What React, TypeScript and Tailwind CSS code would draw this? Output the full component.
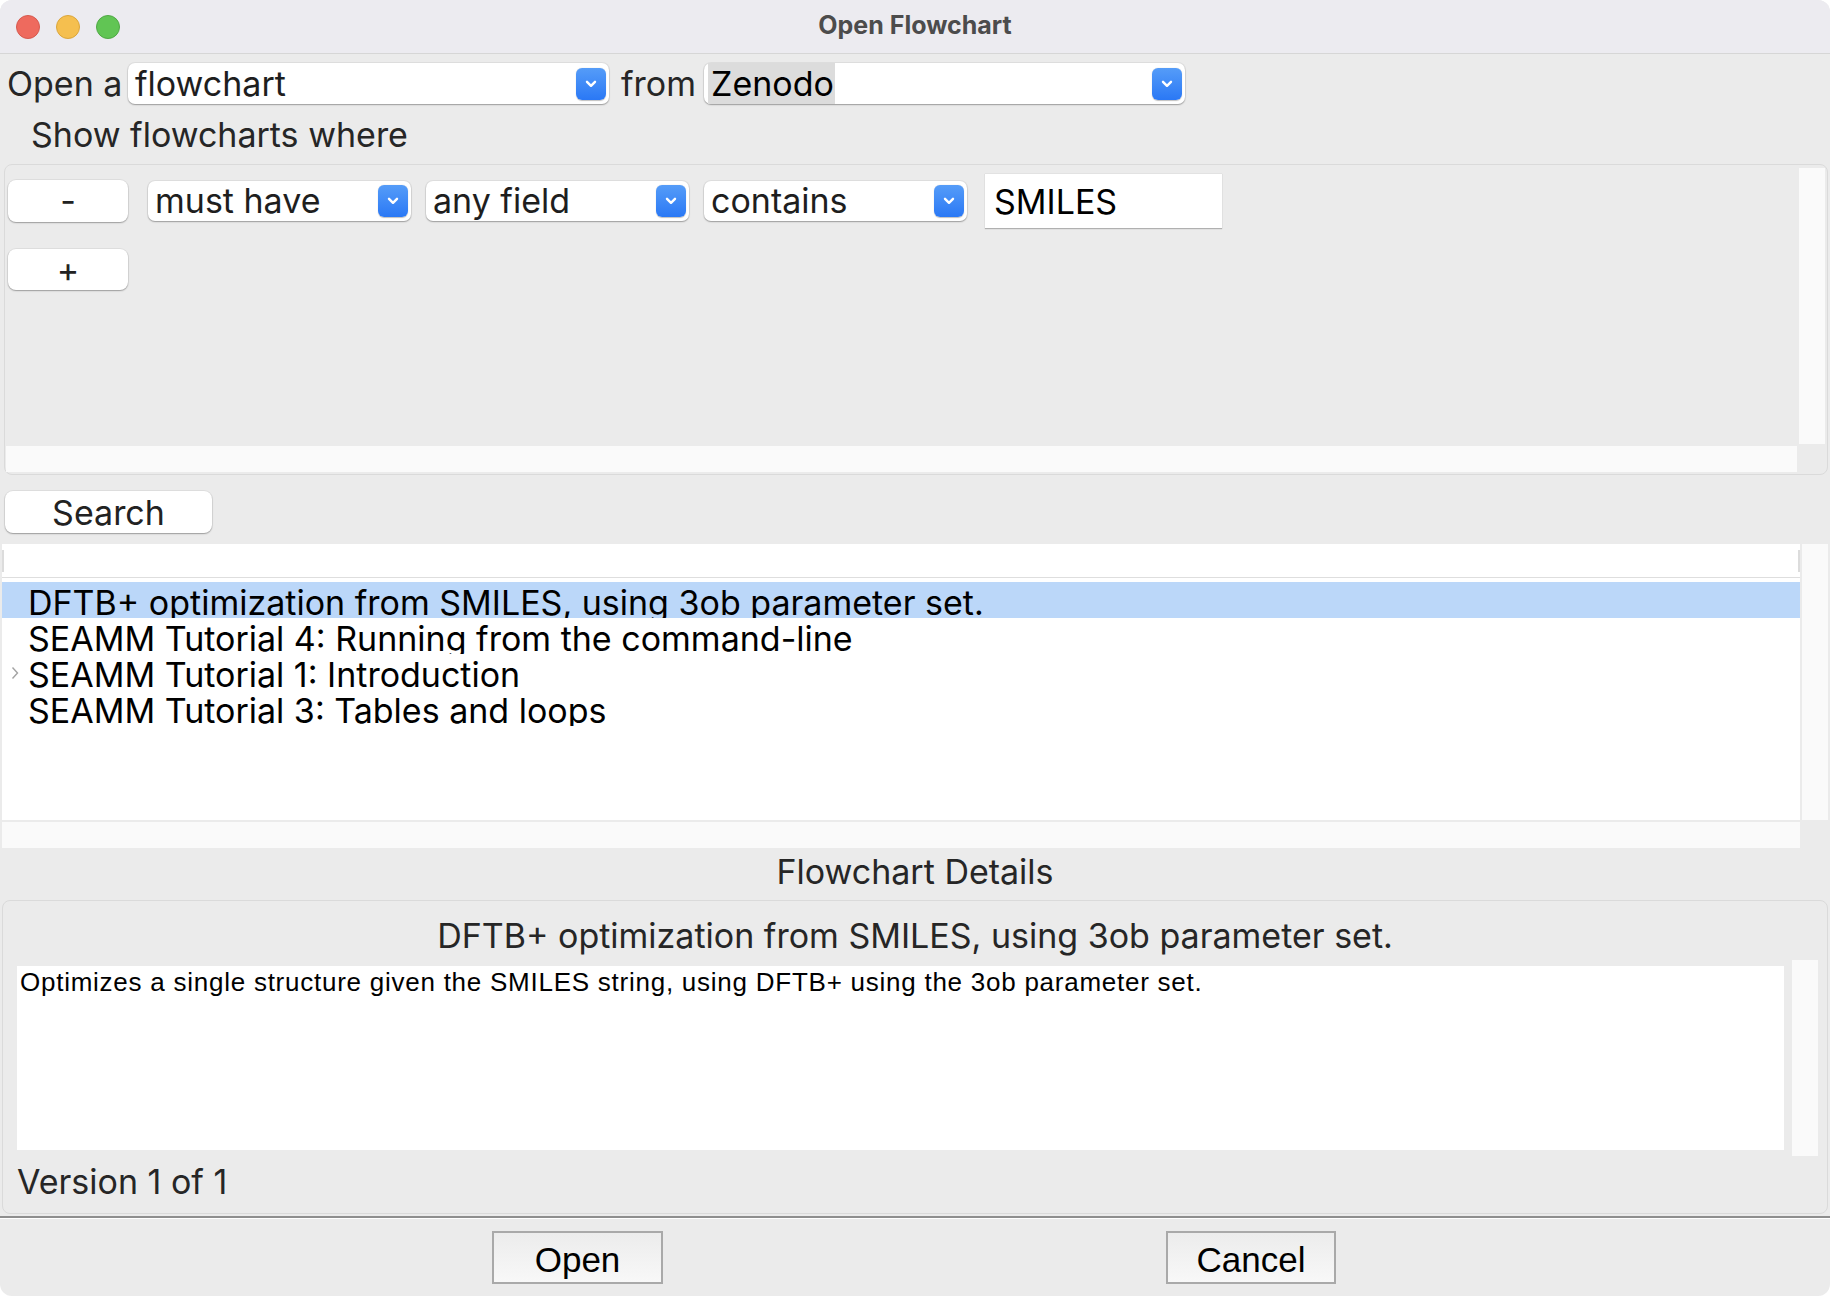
import React from 'react';

const sf = "font-['Inter','Roboto',sans-serif]";
const helv = "font-['Liberation_Sans','Arial',sans-serif]";

function Chevron() {
  return (
    <svg width="12" height="8" viewBox="0 0 12 8" fill="none">
      <path d="M2 1.8l4 4 4-4" stroke="white" strokeWidth="2.4" strokeLinecap="round" strokeLinejoin="round" />
    </svg>
  );
}

function BlueArrow() {
  return (
    <div className="w-[30px] h-[32px] shrink-0 rounded-[6px] bg-gradient-to-b from-[#559cf8] to-[#2a78f5] flex items-center justify-center shadow-[0_0.5px_1px_rgba(0,0,0,0.25)]">
      <Chevron />
    </div>
  );
}

function Combo({ text, className, highlight }: { text: string; className: string; highlight?: boolean }) {
  return (
    <div
      className={`flex items-center justify-between bg-white rounded-[7px] pr-[3px] shadow-[0_0_0_1px_rgba(0,0,0,0.05),0_1px_1.5px_rgba(0,0,0,0.3)] ${className}`}
    >
      {highlight ? (
        <span className="self-stretch flex items-center ml-[4px] pl-[3px] pr-[1px] bg-[#dcdcdc] text-[34px] text-black">{text}</span>
      ) : (
        <span className="pl-[7px] text-[34px] text-[#1e1e1e]">{text}</span>
      )}
      <BlueArrow />
    </div>
  );
}

function PillButton({ label, className }: { label: string; className: string }) {
  return (
    <div
      className={`flex items-center justify-center bg-white rounded-[8px] text-[34px] text-[#222] shadow-[0_0_0_1px_rgba(0,0,0,0.05),0_1px_1.5px_rgba(0,0,0,0.3)] ${className}`}
    >
      {label}
    </div>
  );
}

function SquareButton({ label, className }: { label: string; className: string }) {
  return (
    <div
      className={`flex items-center justify-center h-[53px] pt-[5px] border-2 border-[#a9a9a9] bg-gradient-to-b from-[#ececec] to-[#f8f8f8] text-[35px] text-black ${helv} ${className}`}
    >
      {label}
    </div>
  );
}

const flowcharts = [
  'DFTB+ optimization from SMILES, using 3ob parameter set.',
  'SEAMM Tutorial 4: Running from the command-line',
  'SEAMM Tutorial 1: Introduction',
  'SEAMM Tutorial 3: Tables and loops',
];

export default function App() {
  return (
    <div className={`w-[1830px] h-[1296px] bg-white ${sf}`}>
      <div className="w-full h-full flex flex-col rounded-[12px] overflow-hidden bg-[#ebebeb]">
        {/* title bar */}
        <div className="h-[54px] shrink-0 grid grid-cols-[1fr_auto_1fr] items-center bg-[#ecebf0] border-b border-[#d6d6d6]">
          <div className="flex items-center gap-[16px] pl-[16px]">
            <div className="w-[24px] h-[24px] rounded-full bg-[#ee6a5e] border border-[#d65a4f]" />
            <div className="w-[24px] h-[24px] rounded-full bg-[#f5bf4f] border border-[#dba63c]" />
            <div className="w-[24px] h-[24px] rounded-full bg-[#61c554] border border-[#50a845]" />
          </div>
          <div className="text-[25px] font-bold text-[#4c4c4c] pb-[2px]">Open Flowchart</div>
          <div />
        </div>

        {/* source row */}
        <div className="flex items-center h-[41px] mt-[9px] text-[34px] text-[#262626]">
          <span className="w-[128px] shrink-0 pl-[7px]">Open a</span>
          <Combo text="flowchart" className="w-[481px] h-[41px]" />
          <span className="w-[95px] shrink-0 pl-[12px]">from</span>
          <Combo text="Zenodo" highlight className="w-[481px] h-[41px]" />
        </div>

        <div className="h-[60px] flex items-center pl-[31px] text-[34px] text-[#262626]">Show flowcharts where</div>

        {/* criteria panel */}
        <div className="h-[311px] ml-[4px] mr-[2px] rounded-[8px] border border-[#dadada] flex flex-col pt-[3px] pr-[2px] pl-[1px] pb-[2px]">
          <div className="flex flex-1">
            <div className="flex-1 flex flex-col">
              <div className="flex items-center pt-[5px] pl-[2px]">
                <PillButton label="-" className="w-[120px] h-[42px]" />
                <Combo text="must have" className="w-[263px] h-[40px] ml-[20px]" />
                <Combo text="any field" className="w-[263px] h-[40px] ml-[15px]" />
                <Combo text="contains" className="w-[263px] h-[40px] ml-[15px]" />
                <div className="w-[237px] h-[55px] ml-[18px] bg-white border-t border-[#e2e2e2] shadow-[0_1px_1px_rgba(0,0,0,0.25)] flex items-center pl-[9px] text-[34px] text-black">
                  SMILES
                </div>
              </div>
              <PillButton label="+" className="w-[120px] h-[41px] mt-[21px] ml-[2px]" />
            </div>
            <div className="w-[26px] ml-[2px] bg-[#fafafa]" />
          </div>
          <div className="flex h-[26px] mt-[2px]">
            <div className="flex-1 bg-[#fafafa]" />
            <div className="w-[28px]" />
          </div>
        </div>

        <PillButton label="Search" className="w-[207px] h-[42px] mt-[16px] ml-[5px]" />

        {/* results list */}
        <div className="mt-[11px] ml-[2px] mr-[2px] flex flex-col">
          <div className="flex h-[276px]">
            <div className="flex-1 bg-white flex flex-col">
              <div className="h-[34px] shrink-0 border-b border-[#dedede] flex items-start justify-between">
                <div className="w-[2px] h-[22px] mt-[6px] bg-[#dcdcdc]" />
                <div className="w-[2px] h-[22px] mt-[6px] bg-[#dcdcdc]" />
              </div>
              <div className="h-[4px]" />
              {flowcharts.map((name, i) => (
                <div
                  key={name}
                  className={`h-[36px] overflow-hidden flex text-[34px] leading-[36px] pt-[3px] text-black ${i === 0 ? 'bg-[#bbd7f9]' : ''}`}
                >
                  <div className="w-[26px] shrink-0 flex justify-center pt-[9px]">
                    {i === 2 && (
                      <svg width="8" height="14" viewBox="0 0 8 14" fill="none">
                        <path d="M1.5 1.5l5 5.5-5 5.5" stroke="#a3a3a3" strokeWidth="1.4" />
                      </svg>
                    )}
                  </div>
                  <span className="whitespace-nowrap">{name}</span>
                </div>
              ))}
            </div>
            <div className="w-[26px] ml-[2px] bg-[#fafafa]" />
          </div>
          <div className="flex h-[26px] mt-[2px]">
            <div className="flex-1 bg-[#fafafa]" />
            <div className="w-[28px]" />
          </div>
        </div>

        <div className="h-[52px] pb-[6px] flex items-center justify-center text-[34px] text-[#262626]">Flowchart Details</div>

        {/* details panel */}
        <div className="h-[314px] ml-[2px] mr-[2px] rounded-[8px] border border-[#dadada] flex flex-col">
          <div className="h-[59px] pt-[9px] flex items-center justify-center text-[34px] text-[#262626]">
            DFTB+ optimization from SMILES, using 3ob parameter set.
          </div>
          <div className="flex items-start pl-[14px]">
            <div className={`w-[1767px] h-[184px] mt-[6px] bg-white pl-[3px] pt-[1px] text-[26px] leading-[30px] tracking-[0.75px] text-black ${helv}`}>
              Optimizes a single structure given the SMILES string, using DFTB+ using the 3ob parameter set.
            </div>
            <div className="w-[26px] h-[196px] ml-[8px] bg-[#fafafa]" />
          </div>
          <div className="h-[50px] flex items-center pl-[14px] text-[34px] text-[#262626]">Version 1 of 1</div>
        </div>

        {/* bottom buttons */}
        <div className="mt-[2px] border-t-2 border-[#8e8e8e]">
          <div className="border-t border-white" />
        </div>
        <div className="flex items-start pt-[12px] pl-[492px]">
          <SquareButton label="Open" className="w-[171px]" />
          <SquareButton label="Cancel" className="w-[170px] ml-[503px]" />
        </div>
      </div>
    </div>
  );
}
